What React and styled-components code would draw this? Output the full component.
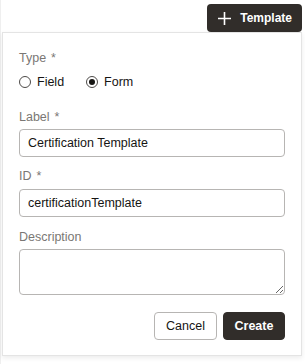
import React, { useState } from "react";
import styled, { createGlobalStyle } from "styled-components";

const GlobalStyle = createGlobalStyle`
  html, body {
    margin: 0;
    padding: 0;
    background: #ffffff;
  }
  body {
    font-family: "Liberation Sans", Arial, sans-serif;
    color: #161513;
  }
`;

const Page = styled.div`
  width: 305px;
  height: 364px;
  display: flex;
  flex-direction: column;
  align-items: flex-end;
  padding: 4px 3px 0 0;
  box-sizing: border-box;
  border-left: 1px solid #efefef;
`;

const AddButton = styled.button`
  display: flex;
  align-items: center;
  gap: 9px;
  height: 28px;
  padding: 0 10px 0 11px;
  border: none;
  border-radius: 4px;
  background: #312d2a;
  color: #ffffff;
  font-family: "Liberation Sans", Arial, sans-serif;
  font-weight: 700;
  font-size: 12px;
  cursor: pointer;
`;

const Panel = styled.div`
  width: 300px;
  box-sizing: border-box;
  padding: 17px 16px 15px;
  background: #ffffff;
  border: 1px solid #e4e4e4;
  box-shadow: 0 2px 5px rgba(0, 0, 0, 0.08);
  display: flex;
  flex-direction: column;
`;

const Label = styled.div`
  font-size: 12.5px;
  line-height: 16px;
  color: #7a7774;
  margin-top: ${(p) => p.$top || 0}px;
  margin-bottom: ${(p) => p.$bottom || 4}px;
`;

const Star = styled.span`
  margin-left: 5px;
`;

const RadioRow = styled.div`
  display: flex;
  align-items: center;
  gap: 22px;
  height: 16px;
`;

const RadioItem = styled.label`
  display: flex;
  align-items: center;
  gap: 6px;
  font-size: 12.5px;
  color: #161513;
  cursor: pointer;
`;

const RadioCircle = styled.span`
  width: 12px;
  height: 12px;
  border-radius: 50%;
  border: 1px solid #4d4a48;
  box-sizing: border-box;
  display: flex;
  align-items: center;
  justify-content: center;
  &::after {
    content: "";
    width: 6px;
    height: 6px;
    border-radius: 50%;
    background: ${(p) => (p.$checked ? "#161513" : "transparent")};
  }
`;

const Input = styled.input`
  height: 28px;
  box-sizing: border-box;
  border: 1px solid #b7b5b3;
  border-radius: 4px;
  padding: 0 8px;
  font-family: "Liberation Sans", Arial, sans-serif;
  font-size: 12.5px;
  color: #161513;
  outline: none;
`;

const TextArea = styled.textarea`
  height: 46px;
  box-sizing: border-box;
  border: 1px solid #b7b5b3;
  border-radius: 4px;
  padding: 6px 8px;
  font-family: "Liberation Sans", Arial, sans-serif;
  font-size: 12.5px;
  resize: vertical;
  outline: none;
`;

const Footer = styled.div`
  display: flex;
  justify-content: flex-end;
  gap: 6px;
  margin-top: 17px;
`;

const ActionButton = styled.button`
  height: 28px;
  min-width: ${(p) => p.$width}px;
  box-sizing: border-box;
  border-radius: 4px;
  border: 1px solid ${(p) => (p.$primary ? "#312d2a" : "#b7b5b3")};
  background: ${(p) => (p.$primary ? "#312d2a" : "#ffffff")};
  color: ${(p) => (p.$primary ? "#ffffff" : "#161513")};
  font-family: "Liberation Sans", Arial, sans-serif;
  font-weight: ${(p) => (p.$primary ? 700 : 400)};
  font-size: 12.5px;
  padding: 0 10px;
  cursor: pointer;
`;

const PlusIcon = () => (
  <svg width="13" height="13" viewBox="0 0 13 13">
    <path d="M6.5 0v13M0 6.5h13" stroke="#ffffff" strokeWidth="1.6" fill="none" />
  </svg>
);

export default function App() {
  const [type, setType] = useState("form");
  return (
    <>
      <GlobalStyle />
      <Page>
        <AddButton>
          <PlusIcon />
          Template
        </AddButton>
        <Panel>
          <Label $bottom={8}>
            Type<Star>*</Star>
          </Label>
          <RadioRow>
            <RadioItem onClick={() => setType("field")}>
              <RadioCircle $checked={type === "field"} />
              Field
            </RadioItem>
            <RadioItem onClick={() => setType("form")}>
              <RadioCircle $checked={type === "form"} />
              Form
            </RadioItem>
          </RadioRow>
          <Label $top={19}>
            Label<Star>*</Star>
          </Label>
          <Input defaultValue="Certification Template" />
          <Label $top={11} $bottom={5}>
            ID<Star>*</Star>
          </Label>
          <Input defaultValue="certificationTemplate" />
          <Label $top={12}>Description</Label>
          <TextArea />
          <Footer>
            <ActionButton $width={63}>Cancel</ActionButton>
            <ActionButton $primary $width={62}>
              Create
            </ActionButton>
          </Footer>
        </Panel>
      </Page>
    </>
  );
}
